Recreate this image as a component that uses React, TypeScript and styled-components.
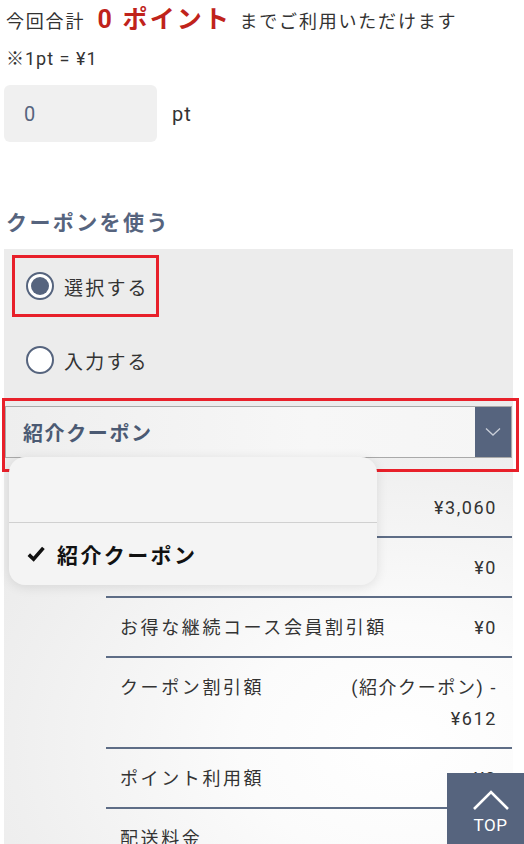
import * as React from "react";
import styled, { createGlobalStyle } from "styled-components";

const slate = "#56647e";

const GlobalStyle = createGlobalStyle`
  html, body {
    margin: 0;
    padding: 0;
    background: #ffffff;
  }
  body {
    font-family: Roboto, "Noto Sans CJK JP", sans-serif;
    color: #333333;
    overflow: hidden;
  }
`;

interface Row {
  label: string;
  value: string;
}

const rows: Row[] = [
  { label: "", value: "¥3,060" },
  { label: "", value: "¥0" },
  { label: "お得な継続コース会員割引額", value: "¥0" },
  { label: "クーポン割引額", value: "(紹介クーポン) - ¥612" },
  { label: "ポイント利用額", value: "¥0" },
  { label: "配送料金", value: "" }
];

export default function App() {
  return (
    <Page>
      <GlobalStyle />
      <PointLine>
        今回合計 <PointAmount>0 ポイント</PointAmount> までご利用いただけます
      </PointLine>
      <Note>※1pt = ¥1</Note>
      <PointRow>
        <PointInput>0</PointInput>
        <Unit>pt</Unit>
      </PointRow>

      <SectionTitle>クーポンを使う</SectionTitle>
      <CouponPanel>
        <Highlight $variant="radio">
          <RadioOption>
            <Radio $checked />
            選択する
          </RadioOption>
        </Highlight>
        <RadioRow>
          <RadioOption>
            <Radio />
            入力する
          </RadioOption>
        </RadioRow>

        <Highlight $variant="select">
          <Select>
            <SelectValue>紹介クーポン</SelectValue>
            <SelectArrow>
              <svg width="16" height="10" viewBox="0 0 16 10">
                <polyline
                  points="1,1.5 8,8 15,1.5"
                  fill="none"
                  stroke="#c9ced8"
                  strokeWidth="1.3"
                />
              </svg>
            </SelectArrow>
          </Select>
        </Highlight>

        <Summary>
          {rows.map((r, i) => (
            <SummaryRow key={i}>
              <Label>{r.label}</Label>
              <Value>{r.value}</Value>
            </SummaryRow>
          ))}
        </Summary>

        <Menu>
          <MenuItem />
          <MenuItem $selected>
            <svg width="18" height="16" viewBox="0 0 18 16">
              <path
                d="M1.8 8.6 L6.6 13.2 L16.4 1.8"
                fill="none"
                stroke="#111"
                strokeWidth="3.6"
              />
            </svg>
            紹介クーポン
          </MenuItem>
        </Menu>
      </CouponPanel>

      <TopButton>
        <svg width="38" height="22" viewBox="0 0 38 22">
          <polyline
            points="2,20 19,3 36,20"
            fill="none"
            stroke="#ffffff"
            strokeWidth="2.6"
          />
        </svg>
        <span>TOP</span>
      </TopButton>
    </Page>
  );
}

const Page = styled.div`
  padding: 6px 0 0 4px;
  height: 838px;
`;

const PointLine = styled.div`
  padding-left: 2px;
  font-size: 18px;
  line-height: 28px;
  letter-spacing: 1.8px;
  white-space: nowrap;
`;

const PointAmount = styled.span`
  color: #c0231b;
  font-weight: 700;
  font-size: 25px;
  letter-spacing: 2.2px;
  margin: 0 2px 0 6px;
`;

const Note = styled.div`
  margin-top: 11px;
  padding-left: 2px;
  font-size: 18px;
  line-height: 24px;
  letter-spacing: 1px;
`;

const PointRow = styled.div`
  margin-top: 14px;
  display: flex;
  align-items: center;
  gap: 15px;
`;

const PointInput = styled.div`
  width: 153px;
  height: 57px;
  box-sizing: border-box;
  padding-left: 20px;
  display: flex;
  align-items: center;
  background: #f0f0f0;
  border-radius: 6px;
  font-size: 20px;
  color: ${slate};
`;

const Unit = styled.span`
  font-size: 20px;
  letter-spacing: 1px;
`;

const SectionTitle = styled.h2`
  margin: 66px 0 0 2px;
  font-size: 21px;
  line-height: 30px;
  font-weight: 700;
  letter-spacing: 2.4px;
  color: ${slate};
`;

const CouponPanel = styled.div`
  position: relative;
  margin: 11px 11px 0 0;
  padding-top: 6px;
  min-height: 600px;
  background: radial-gradient(
    ellipse 90% 55% at 78% 80%,
    #ffffff 0%,
    #fbfbfb 35%,
    #efefef 85%,
    #ececec 100%
  );
`;

const Highlight = styled.div<{ $variant: "radio" | "select" }>`
  box-sizing: border-box;
  border: 3px solid #e8202a;
  ${(p) =>
    p.$variant === "radio"
      ? `
    margin-left: 8px;
    width: 147px;
    height: 62px;
    display: flex;
    align-items: center;
    padding-left: 11px;
  `
      : `
    margin: 7px -6px 0 -2px;
    padding: 5px 4px 11px 0;
  `}
`;

const RadioRow = styled.div`
  margin-top: 12px;
  height: 62px;
  display: flex;
  align-items: center;
  padding-left: 22px;
`;

const RadioOption = styled.label`
  display: flex;
  align-items: center;
  gap: 10px;
  font-size: 19px;
  letter-spacing: 2.2px;
  color: #333;
`;

const Radio = styled.span<{ $checked?: boolean }>`
  width: 28px;
  height: 28px;
  box-sizing: border-box;
  border-radius: 50%;
  border: 2px solid ${slate};
  background: #ffffff;
  display: flex;
  align-items: center;
  justify-content: center;

  &::after {
    content: "";
    width: 18px;
    height: 18px;
    border-radius: 50%;
    background: ${slate};
    display: ${(p) => (p.$checked ? "block" : "none")};
  }
`;

const Select = styled.div`
  display: flex;
  height: 52px;
  box-sizing: border-box;
  border: 1px solid #a9a9a9;
  background: linear-gradient(90deg, #eeeeee 0%, #f7f7f7 60%, #f5f5f5 100%);
`;

const SelectValue = styled.div`
  flex: 1;
  display: flex;
  align-items: center;
  padding-left: 17px;
  font-size: 20px;
  font-weight: 700;
  letter-spacing: 1.6px;
  color: #4b5a73;
`;

const SelectArrow = styled.div`
  width: 36px;
  background: ${slate};
  display: flex;
  align-items: center;
  justify-content: center;
`;

const Summary = styled.div`
  margin: 6px 1px 0 102px;
`;

const SummaryRow = styled.div`
  display: flex;
  justify-content: space-between;
  align-items: flex-start;
  padding: 14px 15px 13px 14px;
  border-bottom: 2px solid #5e6d86;
  font-size: 18px;
  line-height: 31px;
  letter-spacing: 2.6px;
  color: #333;

  &:last-child {
    border-bottom: none;
  }
`;

const Label = styled.span`
  white-space: nowrap;
`;

const Value = styled.span`
  max-width: 172px;
  text-align: right;
  letter-spacing: 1.6px;
`;

const Menu = styled.div`
  position: absolute;
  top: 208px;
  left: 5px;
  width: 368px;
  border-radius: 16px;
  background: #f4f4f4;
  box-shadow: 0 2px 12px rgba(0, 0, 0, 0.1);
  overflow: hidden;
`;

const MenuItem = styled.div<{ $selected?: boolean }>`
  height: ${(p) => (p.$selected ? "62px" : "65px")};
  display: flex;
  align-items: center;
  gap: 12px;
  padding-left: 18px;
  font-size: 21px;
  font-weight: 700;
  letter-spacing: 2.4px;
  color: #111;
  border-bottom: ${(p) => (p.$selected ? "none" : "1px solid #d0d0d0")};
`;

const TopButton = styled.div`
  position: fixed;
  right: 0;
  bottom: 0;
  width: 77px;
  height: 71px;
  box-sizing: border-box;
  padding: 16px 0 0 10px;
  background: ${slate};
  display: flex;
  flex-direction: column;
  align-items: center;
  gap: 5px;
  color: #ffffff;
  font-family: Roboto, sans-serif;
  font-size: 17px;
  letter-spacing: 0.5px;
  line-height: 18px;
`;
